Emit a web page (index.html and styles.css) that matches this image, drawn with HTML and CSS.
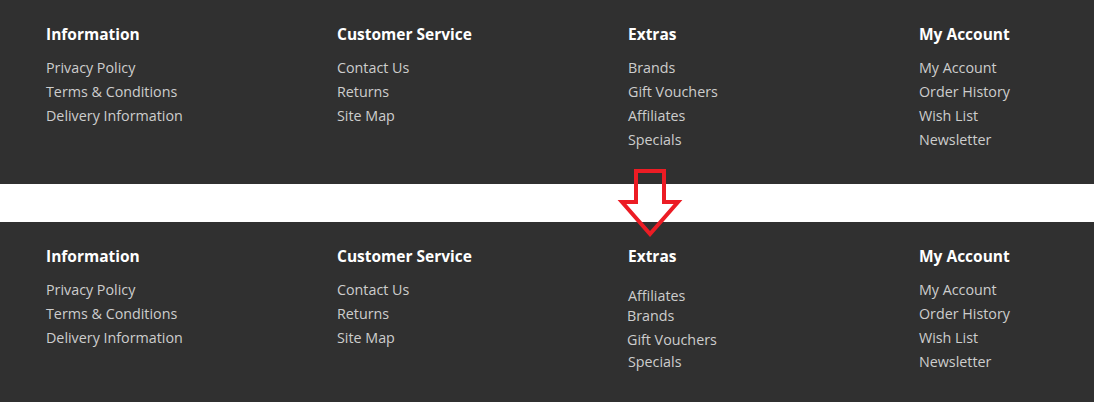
FILE: index.html
```html
<!DOCTYPE html>
<html lang="en">
  <head>
    <meta charset="UTF-8" />
    <title>Footer link order</title>
    <link rel="stylesheet" href="styles.css">
  </head>
  <body>
    <footer class="footer">
      <div class="col">
        <h5>Information</h5>
        <ul>
          <li><a href="#">Privacy Policy</a></li>
          <li><a href="#">Terms &amp; Conditions</a></li>
          <li><a href="#">Delivery Information</a></li>
        </ul>
      </div>
      <div class="col">
        <h5>Customer Service</h5>
        <ul>
          <li><a href="#">Contact Us</a></li>
          <li><a href="#">Returns</a></li>
          <li><a href="#">Site Map</a></li>
        </ul>
      </div>
      <div class="col">
        <h5>Extras</h5>
        <ul>
          <li><a href="#">Brands</a></li>
          <li><a href="#">Gift Vouchers</a></li>
          <li><a href="#">Affiliates</a></li>
          <li><a href="#">Specials</a></li>
        </ul>
      </div>
      <div class="col">
        <h5>My Account</h5>
        <ul>
          <li><a href="#">My Account</a></li>
          <li><a href="#">Order History</a></li>
          <li><a href="#">Wish List</a></li>
          <li><a href="#">Newsletter</a></li>
        </ul>
      </div>
    </footer>

    <div class="gap">
      <svg class="arrow" width="70" height="75" viewBox="0 0 70 75">
        <path d="M21 6 H49 V37 H63 L35 69 L7 37 H21 Z" fill="none" stroke="#ec1c24" stroke-width="4" stroke-linejoin="miter" />
      </svg>
    </div>

    <footer class="footer">
      <div class="col">
        <h5>Information</h5>
        <ul>
          <li><a href="#">Privacy Policy</a></li>
          <li><a href="#">Terms &amp; Conditions</a></li>
          <li><a href="#">Delivery Information</a></li>
        </ul>
      </div>
      <div class="col">
        <h5>Customer Service</h5>
        <ul>
          <li><a href="#">Contact Us</a></li>
          <li><a href="#">Returns</a></li>
          <li><a href="#">Site Map</a></li>
        </ul>
      </div>
      <div class="col">
        <h5>Extras</h5>
        <ul class="messy">
          <li class="shift-down"><a href="#">Affiliates</a></li>
          <li class="pull-up"><a href="#">Brands</a></li>
          <li class="nudge-left"><a href="#">Gift Vouchers</a></li>
          <li class="pull-up-small"><a href="#">Specials</a></li>
        </ul>
      </div>
      <div class="col">
        <h5>My Account</h5>
        <ul>
          <li><a href="#">My Account</a></li>
          <li><a href="#">Order History</a></li>
          <li><a href="#">Wish List</a></li>
          <li><a href="#">Newsletter</a></li>
        </ul>
      </div>
    </footer>
  </body>
</html>
```

FILE: styles.css
```css
* {
  box-sizing: border-box;
}

body {
  margin: 0;
  background: #fff;
  font-family: "Open Sans", "Noto Sans", sans-serif;
  overflow: hidden;
}

.footer {
  background: #303030;
  display: grid;
  grid-template-columns: 291px 291px 291px 1fr;
  padding: 24px 0 0 46px;
  height: 184px;
}

.footer:last-child {
  height: 180px;
}

.col h5 {
  margin: 0 0 12px;
  font-size: 15.5px;
  line-height: 20px;
  font-weight: 700;
  color: #fff;
}

.col ul {
  list-style: none;
  margin: 0;
  padding: 0;
}

.col li {
  font-size: 14.3px;
  line-height: 24px;
}

.col a {
  color: #cdcdcd;
  text-decoration: none;
}

.gap {
  position: relative;
  height: 38px;
  background: #fff;
}

.arrow {
  position: absolute;
  left: 615px;
  top: -19px;
}

/* the broken order, slightly out of line */
.messy .shift-down {
  padding-top: 6px;
}

.messy .pull-up {
  margin-top: -4px;
  margin-left: -1px;
}

.messy .nudge-left {
  margin-left: -1px;
}

.messy .pull-up-small {
  margin-top: -2px;
}
```
